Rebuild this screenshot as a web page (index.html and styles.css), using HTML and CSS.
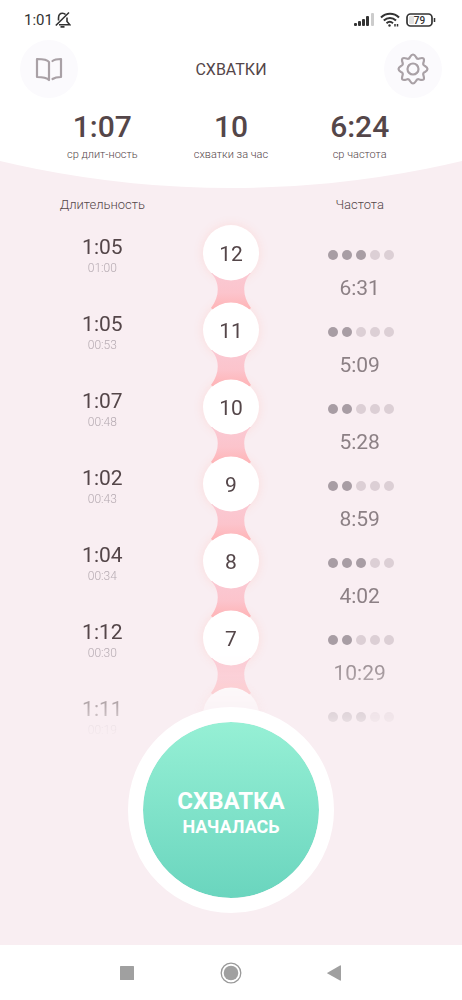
FILE: index.html
```html
<!DOCTYPE html>
<html lang="ru">
<head>
<meta charset="utf-8">
<meta name="viewport" content="width=device-width, initial-scale=1">
<title>Схватки</title>
<link rel="stylesheet" href="styles.css">
</head>
<body>
<div class="app">
  <header class="top">
    <div class="status">
      <div class="status-group">
        <span class="clock">1:01</span>
        <svg class="bell" width="16" height="18" viewBox="0 0 16 18" fill="none" stroke="#333" stroke-width="1.600">
          <path d="M3.500 9.500V7Q3.500 2.200 7.500 2.200Q9.500 2.200 10.500 3.500M12 6.500V10.500L14.800 13.800H4M.8 14.500L14 1.500"/>
          <path d="M5.500 15.800H9.500" stroke-width="1.800"/>
        </svg>
      </div>
      <div class="status-group">
        <svg width="20" height="14" viewBox="0 0 20 14" fill="#333">
          <rect x="0" y="10" width="3" height="3" rx="1"/>
          <rect x="4" y="8" width="3" height="5" rx="1"/>
          <rect x="8" y="6" width="3" height="7" rx="1"/>
          <rect x="12" y="3" width="3" height="10" rx="1"/>
          <rect x="17" y="0" width="3" height="13" rx="1" fill="#ccc"/>
        </svg>
        <svg width="20" height="16" viewBox="0 0 20 16" fill="none" stroke="#333" stroke-width="2">
          <path d="M1 5.500C6 .5 14 .5 19 5.500M3.800 8.500C7.500 5 12.500 5 16 8.500M6.500 11.300C8.500 9.500 11 9.500 13 11.200"/>
          <circle cx="9.500" cy="13.500" r="1.200" fill="#333" stroke="none"/>
          <path d="M15 12V14.500M17.500 12V14.500" stroke-width="1.500"/>
        </svg>
        <svg class="battery" width="30" height="14" viewBox="0 0 30 14">
          <rect x="1" y="1" width="25" height="12" rx="3.500" fill="#fff" stroke="#333" stroke-width="1.700"/>
          <rect x="3" y="3" width="5" height="8" rx="1" fill="#e2e2e2"/>
          <path d="M28.500 5V9" stroke="#333" stroke-width="1.500"/>
          <text x="13.500" y="10.500" text-anchor="middle">79</text>
        </svg>
      </div>
    </div>
    <div class="bar">
      <button class="round" type="button" aria-label="Справка">
        <svg width="28" height="26" viewBox="0 0 28 26" fill="none" stroke="#a9a1a6" stroke-width="2.200" stroke-linejoin="round" stroke-linecap="round">
          <path d="M14 24V6Q12 3 2 3V21Q11 21 14 24Z"/>
          <path d="M17.500 5Q20 3 26 3V21Q20.500 21 17.500 23"/>
        </svg>
      </button>
      <h1 class="title">СХВАТКИ</h1>
      <button class="round" type="button" aria-label="Настройки">
        <svg width="32" height="32" viewBox="-16 -16 32 32" fill="none" stroke="#a9a1a6" stroke-width="2.200" stroke-linejoin="round">
          <path d="M-3-12Q0-17 3-12Q4-9.500 6.500-10.500Q12.500-12.500 10.500-6.500Q9.500-4 12-3Q17 0 12 3Q9.500 4 10.500 6.500Q12.500 12.500 6.500 10.500Q4 9.500 3 12Q0 17-3 12Q-4 9.500-6.500 10.500Q-12.500 12.500-10.500 6.500Q-9.500 4-12 3Q-17 0-12-3Q-9.500-4-10.500-6.500Q-12.500-12.500-6.500-10.500Q-4-9.500-3-12Z"/>
          <circle r="5.500"/>
        </svg>
      </button>
    </div>
    <dl class="stats">
      <div class="stat"><dt>ср длит-ность</dt><dd>1:07</dd></div>
      <div class="stat"><dt>схватки за час</dt><dd>10</dd></div>
      <div class="stat"><dt>ср частота</dt><dd>6:24</dd></div>
    </dl>
  </header>

  <main class="main">
    <div class="heads">
      <h2 class="head">Длительность</h2>
      <h2 class="head head-last">Частота</h2>
    </div>
    <svg class="defs" width="0" height="0" aria-hidden="true">
      <defs>
        <linearGradient id="neck-fill" x1="0" y1="0" x2="0" y2="1">
          <stop offset="0" stop-color="#fac9d3"/>
          <stop offset="0.500" stop-color="#fcc4cc"/>
          <stop offset="1" stop-color="#ffb0b1"/>
        </linearGradient>
        <symbol id="neck" viewBox="0 0 42 40">
          <path d="M1 0C10 9 10 23 1 35L7 40H35L41 35C32 23 32 9 41 0Z" fill="url(#neck-fill)"/>
        </symbol>
      </defs>
    </svg>
    <ol class="list">
      <li class="row">
        <div class="duration"><span class="time">1:05</span><span class="at">01:00</span></div>
        <div class="link"><svg class="neck"><use href="#neck"/></svg><span class="number">12</span></div>
        <div class="frequency"><span class="dots"><i class="dot on"></i><i class="dot on"></i><i class="dot on"></i><i class="dot"></i><i class="dot"></i></span><span class="gap">6:31</span></div>
      </li>
      <li class="row">
        <div class="duration"><span class="time">1:05</span><span class="at">00:53</span></div>
        <div class="link"><svg class="neck"><use href="#neck"/></svg><span class="number">11</span></div>
        <div class="frequency"><span class="dots"><i class="dot on"></i><i class="dot on"></i><i class="dot"></i><i class="dot"></i><i class="dot"></i></span><span class="gap">5:09</span></div>
      </li>
      <li class="row">
        <div class="duration"><span class="time">1:07</span><span class="at">00:48</span></div>
        <div class="link"><svg class="neck"><use href="#neck"/></svg><span class="number">10</span></div>
        <div class="frequency"><span class="dots"><i class="dot on"></i><i class="dot on"></i><i class="dot"></i><i class="dot"></i><i class="dot"></i></span><span class="gap">5:28</span></div>
      </li>
      <li class="row">
        <div class="duration"><span class="time">1:02</span><span class="at">00:43</span></div>
        <div class="link"><svg class="neck"><use href="#neck"/></svg><span class="number">9</span></div>
        <div class="frequency"><span class="dots"><i class="dot on"></i><i class="dot on"></i><i class="dot"></i><i class="dot"></i><i class="dot"></i></span><span class="gap">8:59</span></div>
      </li>
      <li class="row">
        <div class="duration"><span class="time">1:04</span><span class="at">00:34</span></div>
        <div class="link"><svg class="neck"><use href="#neck"/></svg><span class="number">8</span></div>
        <div class="frequency"><span class="dots"><i class="dot on"></i><i class="dot on"></i><i class="dot on"></i><i class="dot"></i><i class="dot"></i></span><span class="gap">4:02</span></div>
      </li>
      <li class="row">
        <div class="duration"><span class="time">1:12</span><span class="at">00:30</span></div>
        <div class="link"><svg class="neck"><use href="#neck"/></svg><span class="number">7</span></div>
        <div class="frequency"><span class="dots"><i class="dot on"></i><i class="dot on"></i><i class="dot"></i><i class="dot"></i><i class="dot"></i></span><span class="gap">10:29</span></div>
      </li>
      <li class="row">
        <div class="duration"><span class="time">1:11</span><span class="at">00:19</span></div>
        <div class="link"><span class="number"></span></div>
        <div class="frequency"><span class="dots"><i class="dot on"></i><i class="dot on"></i><i class="dot on"></i><i class="dot"></i><i class="dot"></i></span></div>
      </li>
    </ol>
    <button class="start" type="button"><span class="start-big">СХВАТКА</span><span class="start-small">НАЧАЛАСЬ</span></button>
  </main>

  <nav class="nav">
    <button class="key" type="button" aria-label="Недавние">
      <svg width="24" height="24" viewBox="0 0 24 24" fill="#a0a0a0"><rect x="5" y="5" width="14" height="14" rx="0.500"/></svg>
    </button>
    <button class="key" type="button" aria-label="Домой">
      <svg width="24" height="24" viewBox="0 0 24 24" fill="#a0a0a0"><circle cx="12" cy="12" r="7.300"/><circle cx="12" cy="12" r="9.800" fill="none" stroke="#999" stroke-width="1.300"/></svg>
    </button>
    <button class="key" type="button" aria-label="Назад">
      <svg width="24" height="24" viewBox="0 0 24 24" fill="#a0a0a0"><path d="M4 12L17 4.500Q18 4 18 5V19Q18 20 17 19.500L4.500 12.500Q4 12.200 4 12Z"/></svg>
    </button>
  </nav>
</div>
</body>
</html>
```
FILE: styles.css
```css
* { box-sizing: border-box; }

body {
  margin: 0;
  font-family: Roboto, "Noto Sans", sans-serif;
  color: #544649;
  background: #f9eef2;
}

button {
  padding: 0;
  border: 0;
  font: inherit;
  cursor: pointer;
}

h1, h2, dl, dd, ol { margin: 0; padding: 0; }

.app {
  display: flex;
  flex-direction: column;
  min-height: 100vh;
}

/* White top area, cut by a shallow arc */
.top {
  height: 188px;
  background: #fff;
  clip-path: circle(1002px at 50% -814px);
}

.status {
  display: flex;
  justify-content: space-between;
  align-items: center;
  height: 40px;
  padding: 0 26px 0 24px;
}

.status-group {
  display: flex;
  align-items: center;
  gap: 6px;
}

.clock {
  font-size: 15px;
  line-height: 20px;
  color: #333;
}

.bell { margin-left: -4px; }

.battery text {
  font-size: 10px;
  font-weight: 500;
  fill: #333;
}

.bar {
  display: flex;
  justify-content: space-between;
  align-items: center;
  padding: 0 20px;
}

.round {
  display: flex;
  justify-content: center;
  align-items: center;
  width: 58px;
  height: 58px;
  border-radius: 50%;
  background: #fbfafd;
}

.title {
  padding-top: 2px;
  font-size: 16px;
  line-height: 20px;
  font-weight: 400;
}

.stats {
  display: grid;
  grid-template-columns: repeat(3, 1fr);
  padding: 10px 38px 0;
}

.stat {
  display: flex;
  flex-direction: column-reverse;
  align-items: center;
}

.stat dt {
  font-size: 11px;
  line-height: 18px;
  font-weight: 300;
  white-space: nowrap;
}

.stat dd {
  font-size: 30px;
  line-height: 38px;
  font-weight: 500;
}

.main {
  position: relative;
  flex: 1;
}

.heads {
  display: grid;
  grid-template-columns: repeat(3, 1fr);
  padding: 7px 38px 0;
}

.head {
  font-size: 13px;
  line-height: 20px;
  font-weight: 300;
  text-align: center;
}

.head-last { grid-column: 3; }

.defs { display: block; }

.list {
  display: grid;
  grid-auto-rows: 77px;
  padding: 0 38px;
  list-style: none;
  mask-image: linear-gradient(#000 436px, transparent 526px);
}

.row {
  display: grid;
  grid-template-columns: repeat(3, 1fr);
}

.duration, .link, .frequency {
  display: flex;
  flex-direction: column;
  align-items: center;
}

.duration { padding-top: 19px; }

.time, .gap {
  font-size: 21px;
  line-height: 26px;
}

.at {
  font-size: 12px;
  line-height: 16px;
  font-weight: 300;
  color: #b6abb2;
}

.link {
  position: relative;
  padding-top: 10px;
}

.number {
  position: relative;
  z-index: 2;
  width: 56px;
  height: 56px;
  border-radius: 50%;
  background: #fff;
  box-shadow: 0 0 10px 1px #fbdfdf;
  font-size: 21px;
  line-height: 58px;
  text-align: center;
}

/* Band joining a circle to the one below it, trimmed to both circle edges */
.neck {
  position: absolute;
  top: 58px;
  left: calc(50% - 21px);
  z-index: 3;
  width: 42px;
  height: 40px;
  clip-path: path("M0 -2A28 28 0 0 0 42 -2V39A28 28 0 0 0 0 39Z");
}

.frequency { padding-top: 35px; }

.dots {
  display: flex;
  gap: 4px;
  margin: 0 2px 15px 4px;
}

.dot {
  width: 10px;
  height: 10px;
  border-radius: 50%;
  background: #dccfd5;
}

.dot.on { background: #a89da4; }

.gap { color: #8c8085; }

.start {
  position: absolute;
  bottom: 32px;
  left: 50%;
  z-index: 3;
  display: flex;
  flex-direction: column;
  justify-content: center;
  align-items: center;
  width: 206px;
  height: 206px;
  margin-left: -103px;
  padding-top: 6px;
  border: 15px solid #fff;
  border-radius: 50%;
  background: linear-gradient(#96f0d5, #6ad5be) padding-box;
  color: #fff;
}

.start-big {
  font-size: 24px;
  line-height: 28px;
  font-weight: 700;
}

.start-small {
  font-size: 18px;
  line-height: 24px;
  font-weight: 700;
}

.nav {
  display: flex;
  justify-content: center;
  align-items: center;
  gap: 80px;
  height: 55px;
  background: #fff;
}

.key {
  display: flex;
  background: none;
}
```
